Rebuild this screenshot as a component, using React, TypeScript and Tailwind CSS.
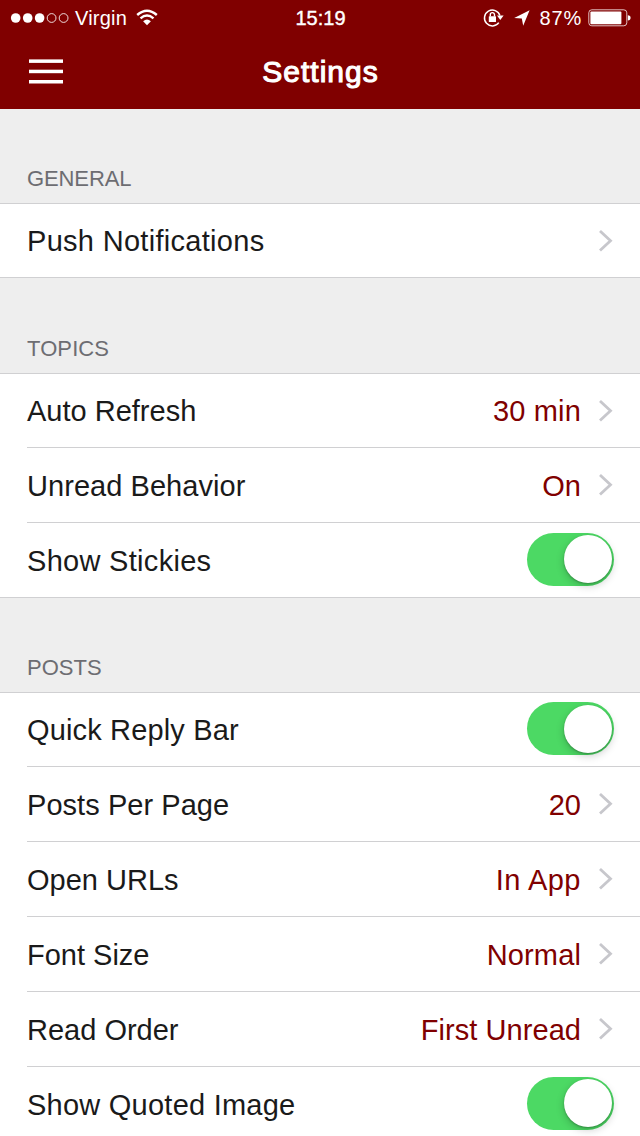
import clsx from 'clsx';

type Item = {
  label: string;
  value?: string;
  toggle?: boolean;
  labelClass?: string;
  valueClass?: string;
};

type Section = {
  title: string;
  headClass: string;
  items: Item[];
};

const sections: Section[] = [
  {
    title: 'GENERAL',
    headClass: 'h-[95px] tracking-[-0.1px]',
    items: [{ label: 'Push Notifications', labelClass: 'tracking-[0.3px]' }],
  },
  {
    title: 'TOPICS',
    headClass: 'h-24 tracking-[0.1px]',
    items: [
      { label: 'Auto Refresh', value: '30 min', valueClass: 'tracking-[0.15px]' },
      { label: 'Unread Behavior', value: 'On', labelClass: 'tracking-[0.05px]' },
      { label: 'Show Stickies', toggle: true, labelClass: 'tracking-[0.3px]' },
    ],
  },
  {
    title: 'POSTS',
    headClass: 'h-[95px]',
    items: [
      { label: 'Quick Reply Bar', toggle: true, labelClass: 'tracking-[0.15px]' },
      { label: 'Posts Per Page', value: '20', labelClass: 'tracking-[0.05px]' },
      { label: 'Open URLs', value: 'In App', valueClass: 'tracking-[0.5px]' },
      { label: 'Font Size', value: 'Normal', valueClass: 'tracking-[0.15px]' },
      { label: 'Read Order', value: 'First Unread', valueClass: 'tracking-[0.05px]' },
      { label: 'Show Quoted Image', toggle: true, labelClass: 'tracking-[0.24px]' },
    ],
  },
];

function StatusBar() {
  return (
    <div className="flex h-[35px] items-center text-[20px] leading-none text-white">
      <div className="flex flex-1 items-center pl-[10px]">
        <svg width="60" height="12" viewBox="0 0 60 12">
          <circle cx="5.7" cy="6" r="4.8" fill="#fff" />
          <circle cx="17.7" cy="6" r="4.8" fill="#fff" />
          <circle cx="29.6" cy="6" r="4.8" fill="#fff" />
          <circle cx="41.6" cy="6" r="4.4" fill="none" stroke="#fff" strokeOpacity="0.85" />
          <circle cx="53.6" cy="6" r="4.4" fill="none" stroke="#fff" strokeOpacity="0.85" />
        </svg>
        <span className="ml-[5px] tracking-[0.2px]">Virgin</span>
        <svg className="ml-[9px]" width="22" height="17" viewBox="0 0 22 17">
          <path d="M1.2 6Q11 -2.4 20.8 6" fill="none" stroke="#fff" strokeWidth="2.5" />
          <path d="M4.5 9.4Q11 3.8 17.5 9.4" fill="none" stroke="#fff" strokeWidth="2.4" />
          <path d="M7.1 12.2Q11 8.6 14.9 12.2L11 16.2Z" fill="#fff" />
        </svg>
      </div>
      <span className="[-webkit-text-stroke:0.4px_white]">15:19</span>
      <div className="flex flex-1 items-center justify-end pr-[9px]">
        <svg width="21" height="19" viewBox="0 0 21 19">
          <path d="M15.8 14.6A7.9 7.9 0 1 1 16.9 7.6" fill="none" stroke="#fff" strokeWidth="1.5" />
          <path d="M14 7.6H20.6L17.3 12Z" fill="#fff" />
          <rect x="5.8" y="8.2" width="7.2" height="5.9" rx="0.6" fill="#fff" />
          <path d="M7.3 8.5V6.7A2.1 2.1 0 0 1 11.5 6.7V8.5" fill="none" stroke="#fff" strokeWidth="1.4" />
        </svg>
        <svg className="ml-[10px]" width="16" height="16" viewBox="0 0 16 16">
          <path d="M15.6 0.2L9.2 15.8L7.8 8.4L0.2 7.9Z" fill="#fff" />
        </svg>
        <span className="ml-[10px] tracking-[0.8px]">87%</span>
        <svg className="ml-[6px]" width="43" height="18" viewBox="0 0 43 18">
          <rect x="0.8" y="0.8" width="38" height="16" rx="3" fill="none" stroke="#fff" strokeOpacity="0.75" />
          <rect x="2.4" y="2.4" width="31" height="12.8" rx="1" fill="#fff" />
          <path d="M39.8 6.2Q42.6 6.4 42.6 8.8T39.8 11.6Z" fill="#fff" />
        </svg>
      </div>
    </div>
  );
}

function Toggle() {
  return (
    <div className="mr-[26px] mb-[2px] flex h-[53px] w-[87px] items-center justify-end rounded-full bg-[#4cd964] pr-[2px]">
      <div className="size-[48px] rounded-full bg-white shadow-[0_3px_8px_rgba(0,0,0,0.2),0_1px_2px_rgba(0,0,0,0.25)]" />
    </div>
  );
}

function Chevron() {
  return (
    <svg className="mr-[26px] ml-[18px]" width="15" height="24" viewBox="0 0 15 24" fill="none">
      <path d="M1 2L11.5 11.8L1 21.6" stroke="#c7c7cc" strokeWidth="2.8" />
    </svg>
  );
}

function Row({ item, first, last }: { item: Item; first: boolean; last: boolean }) {
  return (
    <div className={clsx('flex bg-white pl-[27px]', first ? 'h-[74px]' : 'h-[75px]', last && 'border-b border-[#d0d0d2]')}>
      <div className={clsx('flex flex-1 items-center text-[29px] leading-none text-[#1a1a1a]', !last && 'border-b border-[#d0d0d2]')}>
        <span className={clsx('flex-1 pt-[2px]', item.labelClass)}>{item.label}</span>
        {item.value && <span className={clsx('pt-[2px] text-[#800000]', item.valueClass)}>{item.value}</span>}
        {item.toggle ? <Toggle /> : <Chevron />}
      </div>
    </div>
  );
}

export default function App() {
  return (
    <div className="h-[1136px] w-[640px] overflow-hidden bg-[#eeeeee] font-['Liberation_Sans',Arial,sans-serif]">
      <header className="h-[109px] bg-[#800000]">
        <StatusBar />
        <div className="flex h-[74px] items-center text-white">
          <button className="ml-[29px]">
            <svg width="34" height="26" viewBox="0 0 34 26" fill="#fff">
              <rect y="0.4" width="34" height="3.5" />
              <rect y="10.7" width="34" height="3.5" />
              <rect y="21" width="34" height="3.5" />
            </svg>
          </button>
          <h1 className="flex-1 pr-[62px] text-center text-[30px] leading-none font-normal tracking-[1px] [-webkit-text-stroke:1.1px_white]">
            Settings
          </h1>
        </div>
      </header>
      {sections.map((section) => (
        <section key={section.title}>
          <h2 className={clsx('flex items-end border-b border-[#d0d0d2] pb-[8px] pl-[27px] text-[22px] text-[#6d6d72]', section.headClass)}>
            {section.title}
          </h2>
          {section.items.map((item, i) => (
            <Row key={item.label} item={item} first={i === 0} last={i === section.items.length - 1} />
          ))}
        </section>
      ))}
    </div>
  );
}
